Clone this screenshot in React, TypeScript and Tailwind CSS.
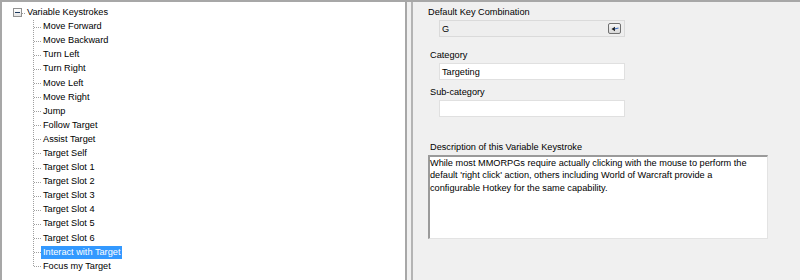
import React from 'react';

const items = [
  'Move Forward',
  'Move Backward',
  'Turn Left',
  'Turn Right',
  'Move Left',
  'Move Right',
  'Jump',
  'Follow Target',
  'Assist Target',
  'Target Self',
  'Target Slot 1',
  'Target Slot 2',
  'Target Slot 3',
  'Target Slot 4',
  'Target Slot 5',
  'Target Slot 6',
  'Interact with Target',
  'Focus my Target',
];

const selected = 'Interact with Target';

function Connector({ last }: { last: boolean }) {
  return (
    <svg width="8" height="14.1" className="shrink-0 block">
      <line
        x1="0.5"
        y1="0"
        x2="0.5"
        y2={last ? 7.5 : 14.1}
        stroke="#a0a0a0"
        strokeWidth="1"
        strokeDasharray="1 1"
      />
      <line x1="1" y1="7.5" x2="8" y2="7.5" stroke="#a0a0a0" strokeWidth="1" strokeDasharray="1 1" />
    </svg>
  );
}

function TreeView() {
  return (
    <div className="w-[407px] shrink-0 h-full bg-white border-l-2 border-r-2 border-[#a7a7a7] pt-[3.5px]">
      <div className="flex items-center h-[14.1px]">
        <div className="w-[11px] shrink-0" />
        <div className="w-[9px] h-[9px] shrink-0 border border-[#919191] bg-gradient-to-b from-white to-[#e4e4e4] flex items-center justify-center">
          <div className="w-[5px] h-[1px] bg-[#1c3a5e]" />
        </div>
        <svg width="3" height="14" className="shrink-0 block">
          <line x1="0" y1="7.5" x2="3" y2="7.5" stroke="#a0a0a0" strokeWidth="1" strokeDasharray="1 1" />
        </svg>
        <span className="px-[2px] leading-[13px]">Variable Keystrokes</span>
      </div>
      {items.map((item, i) => (
        <div key={item} className="flex items-center h-[14.1px]">
          <div className="w-[31px] shrink-0" />
          <Connector last={i === items.length - 1} />
          <span
            className={`px-[2px] h-[13px] leading-[13px] whitespace-nowrap ${
              item === selected ? 'bg-[#3399ff] text-white' : ''
            }`}
          >
            {item}
          </span>
        </div>
      ))}
    </div>
  );
}

function ClearIcon() {
  return (
    <svg width="8" height="6" viewBox="0 0 8 6" className="block">
      <path d="M0.5 3 L4 0.8 L4 5.2 Z" fill="#1a1a1a" />
      <line x1="3.5" y1="3" x2="7.5" y2="2" stroke="#3b6fc4" strokeWidth="1.2" />
    </svg>
  );
}

export default function App() {
  return (
    <div
      className="w-[800px] h-[280px] flex border-t-2 border-[#a7a7a7] text-black overflow-hidden"
      style={{ fontFamily: '"Liberation Sans", Arial, sans-serif', fontSize: '9.2px' }}
    >
      <TreeView />
      <div className="w-[4px] shrink-0 bg-[#f0f0f0]" />
      <div className="flex-1 h-full bg-[#f0f0f0] border-l-2 border-[#b4b4b4] flex flex-col">
        <div className="ml-[15px] mt-[4px] leading-[12px]">Default Key Combination</div>
        <div className="ml-[26px] mt-[2px] w-[186px] h-[17px] border border-[#dadada] bg-[#eeeeee] flex items-center pl-[2px] pr-[3px]">
          <span className="flex-1 leading-[12px]">G</span>
          <div className="w-[13px] h-[11px] rounded-[2px] border border-[#707070] bg-gradient-to-b from-[#f6f6f6] to-[#d8d8d8] flex items-center justify-center">
            <ClearIcon />
          </div>
        </div>
        <div className="ml-[17px] mt-[12px] leading-[12px]">Category</div>
        <div className="ml-[26px] mt-[2px] w-[186px] h-[17px] border border-[#e0e0e0] bg-white flex items-center pl-[2px]">
          <span className="leading-[12px]">Targeting</span>
        </div>
        <div className="ml-[17px] mt-[6px] leading-[12px]">Sub-category</div>
        <div className="ml-[26px] mt-[2px] w-[186px] h-[17px] border border-[#e0e0e0] bg-white" />
        <div className="ml-[17px] mt-[24px] leading-[12px]">Description of this Variable Keystroke</div>
        <div className="ml-[15px] mt-[2px] w-[340px] h-[84px] bg-white border-l-2 border-t-2 border-[#9a9a9a] border-r border-b border-r-[#e3e3e3] border-b-[#e3e3e3] leading-[12.3px] whitespace-nowrap">
          While most MMORPGs require actually clicking with the mouse to perform the
          <br />
          default 'right click' action, others including World of Warcraft provide a
          <br />
          configurable Hotkey for the same capability.
        </div>
      </div>
    </div>
  );
}
